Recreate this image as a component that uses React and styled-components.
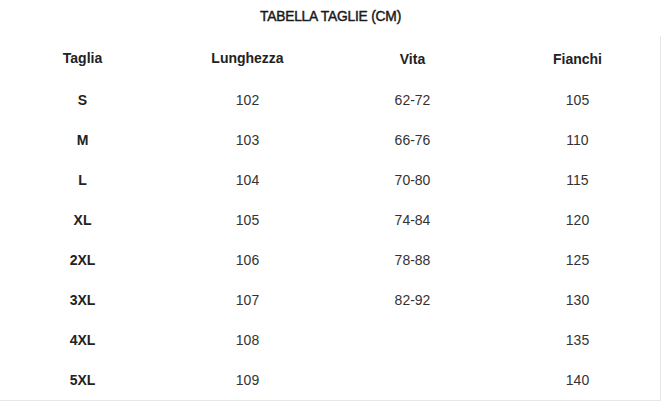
import React from 'react';
import styled, { createGlobalStyle } from 'styled-components';

const GlobalStyle = createGlobalStyle`
  html, body {
    margin: 0;
    padding: 0;
    background: #fff;
  }
  body {
    font-family: 'Liberation Sans', Arial, sans-serif;
    color: #222;
  }
`;

const Page = styled.div`
  width: 661px;
  height: 401px;
  overflow: hidden;
`;

const Title = styled.h2`
  margin: 0;
  height: 36px;
  display: flex;
  align-items: center;
  justify-content: center;
  padding-bottom: 4px;
  box-sizing: border-box;
  font-size: 13.8px;
  font-weight: normal;
  letter-spacing: -0.2px;
  color: #1a1a1a;
  -webkit-text-stroke: 0.45px #1a1a1a;
`;

const Table = styled.div`
  width: 661px;
  box-sizing: border-box;
  border-right: 1px solid #e6e6e6;
  border-bottom: 2px solid #e6e6e6;
`;

const Row = styled.div`
  display: grid;
  grid-template-columns: repeat(4, 165px);
  height: ${p => (p.head ? '44px' : '40px')};
`;

const Cell = styled.div`
  display: flex;
  align-items: center;
  justify-content: center;
  font-size: 14px;
  font-weight: ${p => (p.bold ? 'bold' : 'normal')};
  color: ${p => (p.bold ? '#222' : '#333')};
  padding-top: ${p => (p.shift ? `${p.shift}px` : '0')};
`;

const headers = [
  { label: 'Taglia', shift: 0 },
  { label: 'Lunghezza', shift: -2 },
  { label: 'Vita', shift: 2 },
  { label: 'Fianchi', shift: 2 },
];

const rows = [
  ['S', '102', '62-72', '105'],
  ['M', '103', '66-76', '110'],
  ['L', '104', '70-80', '115'],
  ['XL', '105', '74-84', '120'],
  ['2XL', '106', '78-88', '125'],
  ['3XL', '107', '82-92', '130'],
  ['4XL', '108', '', '135'],
  ['5XL', '109', '', '140'],
];

export default function App() {
  return (
    <Page>
      <GlobalStyle />
      <Title>TABELLA TAGLIE (CM)</Title>
      <Table>
        <Row head>
          {headers.map(h => (
            <Cell key={h.label} bold shift={h.shift}>
              {h.label}
            </Cell>
          ))}
        </Row>
        {rows.map(r => (
          <Row key={r[0]}>
            <Cell bold>{r[0]}</Cell>
            <Cell>{r[1]}</Cell>
            <Cell>{r[2]}</Cell>
            <Cell>{r[3]}</Cell>
          </Row>
        ))}
      </Table>
    </Page>
  );
}
